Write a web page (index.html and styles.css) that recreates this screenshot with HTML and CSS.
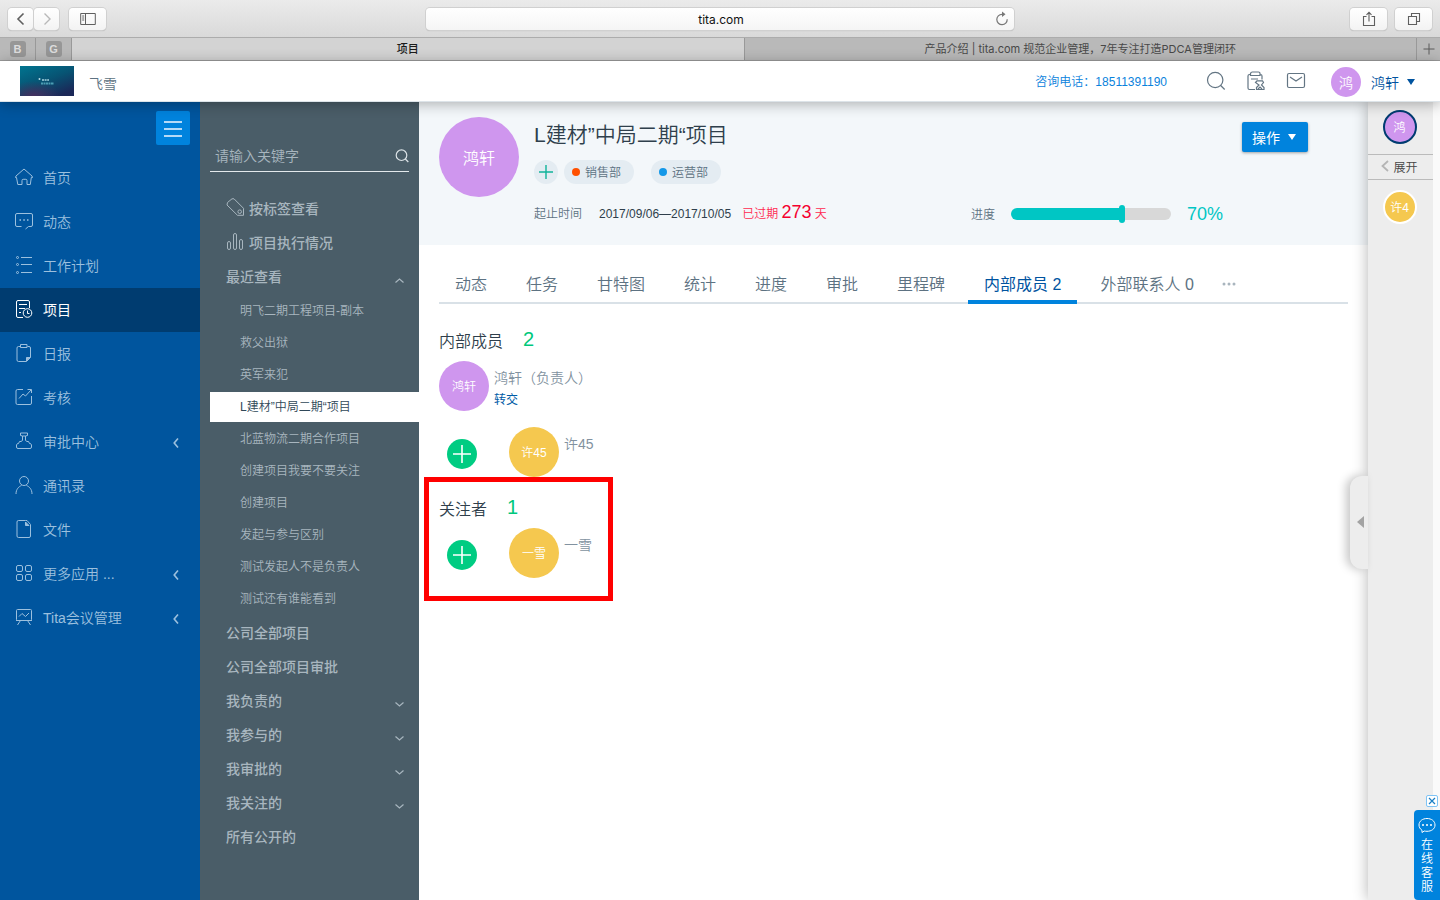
FILE: index.html
```html
<!DOCTYPE html>
<html lang="zh-CN">
<head>
<meta charset="utf-8">
<title>项目</title>
<link rel="stylesheet" href="styles.css">
</head>
<body>
<div class="window">
  <div class="toolbar">
    <div class="toolbar-side">
      <div class="history">
        <button class="tool tool-small" aria-label="后退"><svg width="12" height="14" viewBox="0 0 12 14"><path d="M8.500 1.500 3 7l5.500 5.500" stroke="#5f5f5f" stroke-width="1.600"/></svg></button>
        <button class="tool tool-small" aria-label="前进"><svg width="12" height="14" viewBox="0 0 12 14"><path d="M3.500 1.500 9 7l-5.500 5.500" stroke="#b8b8b8" stroke-width="1.400"/></svg></button>
      </div>
      <button class="tool" aria-label="边栏"><svg width="16" height="14" viewBox="0 0 16 14"><path d="M.7 1.500h14.600v11H.7zM5.500 1.500v11M2.200 4h2M2.200 6h2M2.200 8h2" stroke="#5f5f5f"/></svg></button>
    </div>
    <div class="address">
      <input class="address-input" type="text" value="tita.com" aria-label="网址">
      <button class="reload" aria-label="刷新"><svg width="14" height="16" viewBox="0 0 14 16"><path d="M12.200 8.300A5.200 5.200 0 1 1 7 3.300h2" stroke="#777" stroke-width="1.200"/><path d="M7 .5 10.500 3.300 7 6z" fill="#777"/></svg></button>
    </div>
    <div class="toolbar-side toolbar-end">
      <button class="tool" aria-label="分享"><svg width="14" height="16" viewBox="0 0 14 16"><path d="M4.500 5.500h-3v9h11v-9h-3M7 10.500V1.500M4.500 3.800 7 1.300l2.500 2.500" stroke="#5f5f5f" stroke-width="1.100"/></svg></button>
      <button class="tool" aria-label="标签页"><svg width="14" height="14" viewBox="0 0 14 14"><path d="M1.500 4.500h8v8h-8zM4.500 4V1.500h8v8H10" stroke="#5f5f5f" stroke-width="1.100"/></svg></button>
    </div>
  </div>
  <div class="tabstrip">
    <a class="pin" href="#"><span class="pin-badge">B</span></a>
    <a class="pin" href="#"><span class="pin-badge">G</span></a>
    <a class="page-tab page-tab-current" href="#">项目</a>
    <a class="page-tab" href="#">产品介绍 | tita.com 规范企业管理，7年专注打造PDCA管理闭环</a>
    <button class="new-tab" aria-label="新标签页"><svg width="12" height="12" viewBox="0 0 12 12"><path d="M6 .5v11M.5 6h11" stroke="#5a5a5a"/></svg></button>
  </div>

  <header class="site-header">
    <svg class="logo" width="54" height="30" viewBox="0 0 54 30" role="img" aria-label="飞雪">
      <defs>
        <linearGradient id="sky" x1="0" y1="0" x2=".7" y2="1"><stop offset="0" stop-color="#007590"/><stop offset=".55" stop-color="#075373"/><stop offset="1" stop-color="#1b2858"/></linearGradient>
        <radialGradient id="dusk" cx=".25" cy="1" r=".5"><stop offset="0" stop-color="#45305f"/><stop offset="1" stop-color="#45305f" stop-opacity="0"/></radialGradient>
      </defs>
      <path d="M0 0h54v30H0z" fill="url(#sky)"/><path d="M0 0h54v30H0z" fill="url(#dusk)"/>
      <circle cx="19.500" cy="13" r="1" fill="#b9dce6"/><path d="M22 14h7" stroke="#7db2c4" stroke-width="2" stroke-dasharray="2 .6"/><path d="M21 17.500h13" stroke="#4b9db3" stroke-width="2" stroke-dasharray="2 .5"/>
    </svg>
    <span class="company">飞雪</span>
    <span class="hotline">咨询电话：18511391190</span>
    <nav class="quick">
      <button class="plain" aria-label="搜索"><svg width="20" height="20" viewBox="0 0 20 20"><circle cx="9.200" cy="9" r="7.700"/><path d="m14.700 14.500 4 4"/></svg></button>
      <button class="plain" aria-label="日程"><svg width="20" height="20" viewBox="0 0 20 20"><path d="M4.500 3.500H3.500A1.500 1.500 0 0 0 2 5v12a1.500 1.500 0 0 0 1.500 1.500H9M14.500 3.500A1.500 1.500 0 0 1 16 5v3.500M6.500 1h6a1.500 1.500 0 0 1 1.500 1.500v2H4.500v-2a2 2 0 0 1 2-1.500zM5 8h7M9.500 11.500 11 9.800h5.500l1 1.700-2 2.500 2.500 2.500v2h-7.500v-2l2.500-2.500zM12 18l2-2 2 2"/></svg></button>
      <button class="plain" aria-label="消息"><svg width="20" height="20" viewBox="0 0 20 20"><rect x="1.500" y="2.500" width="17" height="14" rx="1.500"/><path d="m4 6 6 4 6-4"/></svg></button>
    </nav>
    <button class="account"><span class="avatar avatar-30 violet">鸿</span><span>鸿轩</span><svg width="8" height="6" viewBox="0 0 8 6"><path d="M0 0h8L4 6z" fill="#00539f"/></svg></button>
  </header>

  <div class="workspace">
    <nav class="main-nav">
      <button class="menu-toggle" aria-label="菜单"><svg width="18" height="16" viewBox="0 0 18 16"><path d="M0 1h18M0 8h18M0 15h18" stroke="#b5daf7" stroke-width="2"/></svg></button>
      <a class="nav-item" href="#"><svg width="18" height="18" viewBox="0 0 18 18"><path d="M1.500 9.500h-1L1 8l8-7 8 7 .5 1.500h-1.200l-1 7H12v-4a1.200 1.200 0 0 0-1.200-1.200H8.200A1.200 1.200 0 0 0 7 12.500v4H2.800z"/></svg>首页</a>
      <a class="nav-item" href="#"><svg width="18" height="18" viewBox="0 0 18 18"><path d="M6.500 14.500H2A1.500 1.500 0 0 1 .5 13V3A1.500 1.500 0 0 1 2 1.500h14A1.500 1.500 0 0 1 17.500 3v10a1.500 1.500 0 0 1-1.500 1.500h-2.500l-3 2.500"/><path d="M4.500 8H6M8.300 8h1.500M12 8h1.500" stroke-width="1.500"/></svg>动态</a>
      <a class="nav-item" href="#"><svg width="18" height="18" viewBox="0 0 18 18"><path d="M6 1.500h11M6 8.500h11M6 16.500h11"/><circle cx="2.500" cy="1.500" r="1"/><circle cx="2.500" cy="8.500" r="1"/><circle cx="2.500" cy="16.500" r="1"/></svg>工作计划</a>
      <a class="nav-item nav-active" href="#"><svg width="18" height="18" viewBox="0 0 18 18"><path d="M8 17.500H3A1.500 1.500 0 0 1 1.500 16V2A1.500 1.500 0 0 1 3 .5h10A1.500 1.500 0 0 1 14.500 2v6M4 4.500h8M4 8.500h6M4 12.500h2"/><circle cx="12.500" cy="13" r="4.300"/><path d="M12.500 10.500V13.500h2"/></svg>项目</a>
      <a class="nav-item" href="#"><svg width="18" height="18" viewBox="0 0 18 18"><path d="M5 2.500H3.500A1.500 1.500 0 0 0 2 4v12a1.500 1.500 0 0 0 1.500 1.500h8l4-4V4A1.500 1.500 0 0 0 14 2.500h-1.500M5.500.5h6.500v3H5.500z"/><path d="M11.500 17v-3.500H15z" fill="#9cc0de"/></svg>日报</a>
      <a class="nav-item" href="#"><svg width="18" height="18" viewBox="0 0 18 18"><path d="M8 1.500H2.500A1.500 1.500 0 0 0 1 3v12a1.500 1.500 0 0 0 1.500 1.500H15a1.500 1.500 0 0 0 1.500-1.500V8M4 10.500 8 6l2.500 2L16 2M12.500 1.500H16.500V5"/></svg>考核</a>
      <a class="nav-item" href="#"><svg width="18" height="18" viewBox="0 0 18 18"><path d="M7.500 4v4.500L6 9.500H4.500L3.500 11.500H2.500L1.500 13v2A1.500 1.500 0 0 0 3 16.500h12a1.500 1.500 0 0 0 1.500-1.500v-2l-1-1.500h-1l-1-2H12L10.500 8.500V4M5.500 3.500V1h7v2.500l-2 .5h-3z"/></svg>审批中心<svg class="nav-arrow" width="6" height="10" viewBox="0 0 6 10"><path d="M5 .5 1.200 5 5 9.500"/></svg></a>
      <a class="nav-item" href="#"><svg width="18" height="18" viewBox="0 0 18 18"><circle cx="9" cy="5" r="4.500"/><path d="M1 18c0-5 3-7.500 5.500-8.500M17 18c0-5-3-7.500-5.500-8.500"/></svg>通讯录</a>
      <a class="nav-item" href="#"><svg width="18" height="18" viewBox="0 0 18 18"><path d="M10.500.5h-7A1.500 1.500 0 0 0 2 2v14a1.500 1.500 0 0 0 1.500 1.500H14a1.500 1.500 0 0 0 1.500-1.500V4.500L12 .5z"/><path d="M10.500 2v3.500H14z" fill="#9cc0de"/></svg>文件</a>
      <a class="nav-item" href="#"><svg width="18" height="18" viewBox="0 0 18 18"><rect x="1.500" y="1.500" width="6" height="6" rx="1.500"/><rect x="10.500" y="1.500" width="6" height="6" rx="1.500"/><rect x="1.500" y="10.500" width="6" height="6" rx="1.500"/><rect x="10.500" y="10.500" width="6" height="6" rx="1.500"/></svg>更多应用 ...<svg class="nav-arrow" width="6" height="10" viewBox="0 0 6 10"><path d="M5 .5 1.200 5 5 9.500"/></svg></a>
      <a class="nav-item" href="#"><svg width="18" height="18" viewBox="0 0 18 18"><rect x="1.500" y="1.500" width="15" height="11" rx="1"/><path d="M4 8.500 7 5.500l3.500 3 3.500-3.500M1 12.500h16M5.500 12.500 2.500 17M12.500 12.500l3 4.500"/></svg>Tita会议管理<svg class="nav-arrow" width="6" height="10" viewBox="0 0 6 10"><path d="M5 .5 1.200 5 5 9.500"/></svg></a>
    </nav>

    <aside class="project-nav">
      <div class="search">
        <input class="search-input" type="text" placeholder="请输入关键字" aria-label="请输入关键字">
        <button class="search-button" aria-label="搜索"><svg width="14" height="14" viewBox="0 0 14 14"><circle cx="6.500" cy="6.200" r="5.300"/><path d="m10.300 10 3 3"/></svg></button>
      </div>
      <a class="group" href="#"><svg width="19" height="19" viewBox="0 0 19 19"><path d="M1.500 4.500 6 .8h2l9.500 9.500v7h-6L1 7z" stroke-linejoin="round"/><circle cx="13.700" cy="13.700" r="1.800"/></svg>按标签查看</a>
      <a class="group" href="#"><svg width="19" height="19" viewBox="0 0 19 19"><rect x="1.500" y="9.500" width="3" height="8" rx="1.500"/><rect x="7.500" y="1.500" width="3" height="16" rx="1.500"/><rect x="13.500" y="7.500" width="3" height="10" rx="1.500"/></svg>项目执行情况</a>
      <a class="group" href="#">最近查看<svg class="fold" width="9" height="5" viewBox="0 0 9 5"><path d="m.5 4.500 4-3.500 4 3.500"/></svg></a>
      <div class="recent">
        <a class="recent-item" href="#">明飞二期工程项目-副本</a>
        <a class="recent-item" href="#">救父出狱</a>
        <a class="recent-item" href="#">英军来犯</a>
        <a class="recent-item recent-active" href="#">L建材”中局二期“项目</a>
        <a class="recent-item" href="#">北蓝物流二期合作项目</a>
        <a class="recent-item" href="#">创建项目我要不要关注</a>
        <a class="recent-item" href="#">创建项目</a>
        <a class="recent-item" href="#">发起与参与区别</a>
        <a class="recent-item" href="#">测试发起人不是负责人</a>
        <a class="recent-item" href="#">测试还有谁能看到</a>
      </div>
      <a class="group" href="#">公司全部项目</a>
      <a class="group" href="#">公司全部项目审批</a>
      <a class="group" href="#">我负责的<svg class="fold" width="9" height="5" viewBox="0 0 9 5"><path d="m.5.500 4 3.500 4-3.500"/></svg></a>
      <a class="group" href="#">我参与的<svg class="fold" width="9" height="5" viewBox="0 0 9 5"><path d="m.5.500 4 3.500 4-3.500"/></svg></a>
      <a class="group" href="#">我审批的<svg class="fold" width="9" height="5" viewBox="0 0 9 5"><path d="m.5.500 4 3.500 4-3.500"/></svg></a>
      <a class="group" href="#">我关注的<svg class="fold" width="9" height="5" viewBox="0 0 9 5"><path d="m.5.500 4 3.500 4-3.500"/></svg></a>
      <a class="group" href="#">所有公开的</a>
    </aside>

    <main class="project">
      <section class="summary">
        <span class="avatar avatar-80 violet">鸿轩</span>
        <div class="summary-body">
          <div class="title-row">
            <h1 class="title">L建材”中局二期“项目</h1>
            <button class="action">操作<svg width="8" height="6" viewBox="0 0 8 6"><path d="M0 0h8L4 6z" fill="#fff"/></svg></button>
          </div>
          <div class="tags">
            <button class="tag-add" aria-label="添加标签"><svg width="14" height="14" viewBox="0 0 14 14"><path d="M7 0v14M0 7h14" stroke="#10b39a" stroke-width="1.400"/></svg></button>
            <span class="tag"><i class="dot dot-orange"></i>销售部</span>
            <span class="tag"><i class="dot dot-blue"></i>运营部</span>
          </div>
          <div class="facts">
            <div class="dates"><span>起止时间</span><time class="range">2017/09/06—2017/10/05</time><span class="overdue">已过期 <b class="overdue-days">273</b> 天</span></div>
            <div class="progress"><label for="done">进度</label><input class="slider" id="done" type="range" min="0" max="100" value="70"><output class="percent">70%</output></div>
          </div>
        </div>
      </section>

      <nav class="tabs">
        <a class="tab" href="#">动态</a><a class="tab" href="#">任务</a><a class="tab" href="#">甘特图</a><a class="tab" href="#">统计</a><a class="tab" href="#">进度</a><a class="tab" href="#">审批</a><a class="tab" href="#">里程碑</a><a class="tab tab-active" href="#">内部成员 2</a><a class="tab" href="#">外部联系人 0</a>
        <button class="more" aria-label="更多"><svg width="14" height="4" viewBox="0 0 14 4"><g fill="#a9b5be"><circle cx="2" cy="2" r="1.500"/><circle cx="7" cy="2" r="1.500"/><circle cx="12" cy="2" r="1.500"/></g></svg></button>
      </nav>

      <section class="people">
        <h2 class="people-title">内部成员<span class="count">2</span></h2>
        <div class="person">
          <span class="avatar avatar-50 violet">鸿轩</span>
          <div class="person-text"><span>鸿轩（负责人）</span><a class="transfer" href="#">转交</a></div>
        </div>
        <div class="person-row">
          <button class="add" aria-label="添加成员"><svg width="18" height="18" viewBox="0 0 18 18"><path d="M9 0v18M0 9h18" stroke="#fff" stroke-width="1.600"/></svg></button>
          <div class="person"><span class="avatar avatar-50 amber">许45</span><div class="person-text"><span>许45</span></div></div>
        </div>
      </section>
      <section class="people followers">
        <h2 class="people-title">关注者<span class="count">1</span></h2>
        <div class="person-row">
          <button class="add" aria-label="添加关注者"><svg width="18" height="18" viewBox="0 0 18 18"><path d="M9 0v18M0 9h18" stroke="#fff" stroke-width="1.600"/></svg></button>
          <div class="person"><span class="avatar avatar-50 amber">一雪</span><div class="person-text"><span>一雪</span></div></div>
        </div>
        <div class="highlight"></div>
      </section>
    </main>

    <aside class="rail">
      <div class="rail-body">
        <div class="rail-top"><span class="avatar avatar-34 violet ring-navy">鸿</span></div>
        <button class="expand"><svg width="8" height="12" viewBox="0 0 8 12"><path d="M7 1 1.500 6 7 11" stroke="#b5b5b5" stroke-width="1.800"/></svg>展开</button>
        <div class="rail-list"><span class="avatar avatar-34 amber ring-white">许4</span></div>
      </div>
      <button class="handle" aria-label="展开侧栏"><svg width="7" height="12" viewBox="0 0 7 12"><path d="M7 0v12L0 6z" fill="#a3a3a3"/></svg></button>
    </aside>
  </div>

  <div class="support">
    <button class="support-close" aria-label="关闭"><svg width="8" height="8" viewBox="0 0 8 8"><path d="m1 1 6 6M7 1 1 7" stroke="#1b7fc4" stroke-width="1.200"/></svg></button>
    <button class="support-open"><svg width="18" height="17" viewBox="0 0 18 17"><path d="M4 15.500v-2.200C2 12 1 10 1 8c0-4 3.600-6.500 8-6.500S17 4 17 8s-3.600 6.300-8 6.300c-1 0-2-.1-2.800-.3z" stroke="#fff"/><g fill="#fff"><circle cx="5" cy="8" r="1"/><circle cx="9" cy="8" r="1"/><circle cx="13" cy="8" r="1"/></g></svg><span class="support-text">在线客服</span></button>
  </div>
</div>
</body>
</html>
```
FILE: styles.css
```css
* { box-sizing: border-box; }
body {
  margin: 0;
  font-family: "Liberation Sans", "Noto Sans CJK SC", sans-serif;
  font-size: 14px;
  font-weight: 350;
  color: #2f3f4c;
}
a { color: inherit; text-decoration: none; }
button, input { font: inherit; color: inherit; }
button { border: 0; padding: 0; background: none; display: flex; align-items: center; justify-content: center; }
svg { display: block; flex: none; fill: none; }
h1, h2 { margin: 0; font-weight: inherit; }
.window { position: relative; min-height: 100vh; display: flex; flex-direction: column; }

/* browser bar */
.toolbar { display: flex; align-items: center; height: 38px; padding: 0 8px; background: linear-gradient(#ebebeb, #d9d9d9); border-bottom: 1px solid #acacac; }
.toolbar-side { flex: 1; display: flex; gap: 10px; }
.toolbar-end { justify-content: flex-end; gap: 8px; }
.history { display: flex; gap: 1px; }
.tool { width: 37px; height: 22px; border-radius: 4px; background: linear-gradient(#fff, #f3f3f3); box-shadow: 0 0 0 1px #d0d0d0, 0 1px 1px #aaa; }
.tool-small { width: 25px; }
.address { position: relative; flex: 0 1 588px; display: flex; }
.address-input { width: 100%; height: 22px; border: 0; border-radius: 4px; padding: 1px 29px 0 31px; text-align: center; font-family: Inter, sans-serif; font-size: 12px; font-weight: 400; color: #111; background: linear-gradient(#fff, #f5f5f5); box-shadow: 0 0 0 1px #d0d0d0, 0 1px 1px #aaa; }
.reload { position: absolute; top: 3px; right: 5px; }
.tabstrip { display: flex; height: 23px; background: #b9b9b9; border-bottom: 1px solid #9c9c9c; font-size: 11px; font-weight: 400; color: #484848; }
.pin { width: 36px; display: flex; align-items: center; justify-content: center; border-right: 1px solid #999; }
.pin-badge { width: 16px; height: 16px; border-radius: 3px; background: #979797; color: #ddd; font-size: 11px; font-weight: 700; line-height: 16px; text-align: center; }
.page-tab { flex: 1; min-width: 0; line-height: 22px; text-align: center; white-space: nowrap; overflow: hidden; border-right: 1px solid #999; font-family: Inter, "Noto Sans CJK SC", sans-serif; }
.page-tab-current { background: #d3d3d3; color: #1c1c1c; font-weight: 500; }
.new-tab { width: 23px; }

/* site header */
.site-header { position: relative; z-index: 3; display: flex; align-items: center; height: 41px; padding: 0 25px 0 20px; background: #fff; border-bottom: 1px solid #dde4e9; box-shadow: 0 2px 14px rgba(0, 0, 0, .3); }
.company { margin: 4px auto 0 15px; color: #5d7282; }
.hotline { padding-bottom: 2px; color: #0a82dc; font-size: 12px; }
.quick { display: flex; gap: 20px; margin: 0 25px 0 39px; }
.plain svg { stroke: #637583; stroke-width: 1.2; }
.account { gap: 10px; padding-top: 2px; color: #00539f; white-space: nowrap; }
.account svg { margin-left: -2px; }

.avatar { display: flex; flex: none; align-items: center; justify-content: center; border-radius: 50%; padding-bottom: 1px; color: #fff; font-size: 12px; white-space: nowrap; }
.avatar-30 { width: 30px; height: 30px; font-size: 14px; }
.avatar-34 { width: 34px; height: 34px; }
.avatar-50 { width: 50px; height: 50px; }
.avatar-80 { width: 80px; height: 80px; font-size: 16px; }
.violet { background: #cf96ee; }
.amber { background: #f5c84f; }
.ring-navy { border: 2px solid #003c71; }
.ring-white { border: 2px solid #fff; }

.workspace { flex: 1; display: flex; }

/* main navigation */
.main-nav { flex: none; width: 200px; padding-top: 9px; background: #00559e; color: #9cc0de; }
.menu-toggle { width: 34px; height: 34px; margin: 0 10px 11px auto; padding-top: 2px; border-radius: 2px; background: #0083dd; }
.nav-item { display: flex; align-items: center; gap: 10px; height: 44px; padding: 0 21px 2px 15px; }
.nav-item svg { stroke: #9cc0de; }
.nav-item .nav-arrow { margin: 4px 0 0 auto; stroke-width: 1.6; }
.nav-active { background: #003c70; color: #fff; font-weight: 400; }
.nav-item.nav-active svg { stroke: #fff; }

/* project navigation */
.project-nav { flex: none; width: 219px; padding: 39px 0 46px; background: #4a5d68; color: #a8b6bf; }
.search { display: flex; align-items: center; height: 31px; margin: 0 10px 20px; border-bottom: 1px solid #e3e9ec; }
.search-input { flex: 1; min-width: 0; padding: 0 5px; border: 0; background: none; font-size: 14px; }
.search-input::placeholder { color: #a8b6bf; opacity: 1; }
.search-button svg { stroke: #dce3e7; stroke-width: 1.2; }
.group { display: flex; align-items: center; gap: 4px; height: 34px; padding: 0 15px 2px 26px; font-weight: 500; }
.group svg { stroke: #a8b6bf; margin-bottom: 2px; }
.group .fold { margin: 8px 0 0 auto; stroke-width: 1.2; }
.recent { display: flex; flex-direction: column; gap: 2px; padding: 2px 0 2px 10px; font-size: 12px; }
.recent-item { padding-left: 30px; line-height: 30px; }
.recent-active { background: #fff; color: #2f4858; }

/* project */
.project { flex: 1; min-width: 0; background: #fff; }
.summary { display: flex; gap: 15px; padding: 15px 60px 19px 20px; background: #f3f7fa; }
.summary-body { flex: 1; min-width: 0; }
.title-row { display: flex; justify-content: space-between; align-items: center; height: 38px; }
.title { padding-bottom: 2px; font-size: 21px; line-height: 36px; }
.action { gap: 8px; width: 66px; height: 30px; margin-top: 2px; padding: 0 2px 1px 0; border-radius: 2px; background: #0083dd; color: #fff; box-shadow: 0 1px 3px rgba(0, 0, 0, .35); font-weight: 400; }
.tags { display: flex; align-items: center; gap: 17px; margin-top: 5px; color: #5d7282; font-size: 12px; }
.tag-add { width: 24px; height: 24px; border-radius: 50%; background: #e4ecf2; margin-right: -11px; }
.tag { display: flex; align-items: center; gap: 5px; height: 24px; padding: 0 13px 1px 8px; border-radius: 12px; background: #e4ecf2; }
.dot { width: 8px; height: 8px; border-radius: 50%; }
.dot-orange { background: #ff5000; }
.dot-blue { background: #1498e8; }
.facts { display: flex; justify-content: space-between; align-items: center; height: 24px; margin-top: 18px; font-size: 12px; color: #5d7282; white-space: nowrap; }
.dates { display: flex; align-items: baseline; padding-bottom: 3px; }
.range { margin: 0 11px 0 17px; color: #2f3f4c; }
.overdue { color: #ff2a50; }
.overdue-days { font-size: 18px; font-weight: 400; color: #f5002f; }
.progress { display: flex; align-items: center; width: 337px; }
.progress label { padding-bottom: 2px; }
.slider { appearance: none; width: 160px; height: 18px; margin: 0 16px; background: none; }
.slider::-webkit-slider-runnable-track { height: 12px; border-radius: 6px; background: linear-gradient(90deg, #00c6c4 70%, #d8d8d8 70%); }
.slider::-webkit-slider-thumb { appearance: none; width: 6px; height: 18px; margin-top: -3px; border-radius: 3px; background: #00c6c4; }
.percent { font-size: 18px; color: #00c6c4; }

.tabs { display: flex; gap: 7px; margin: 18px 20px 0; border-bottom: 2px solid #d9e1e7; font-size: 16px; color: #5d7282; white-space: nowrap; }
.tab { height: 41px; padding: 1px 16px 0; margin-bottom: -2px; line-height: 42px; border-bottom: 4px solid transparent; }
.tab-active { color: #00539f; border-color: #0083dd; font-weight: 400; }
.more { margin-left: 5px; padding-top: 3px; }

.people { position: relative; padding: 21px 20px 0; color: #8292a0; }
.followers { padding-top: 16px; }
.people-title { display: flex; align-items: center; gap: 20px; height: 30px; padding-bottom: 1px; font-size: 16px; color: #2f3f4c; }
.count { font-size: 20px; color: #00c87c; }
.person { display: flex; gap: 5px; margin-top: 5px; }
.people-title + .person { margin-top: 6px; }
.person-text { display: flex; flex-direction: column; padding-top: 7px; line-height: 20px; }
.transfer { color: #005ba6; font-size: 12px; line-height: 24px; font-weight: 400; }
.person-row { display: flex; align-items: center; gap: 32px; padding-left: 8px; }
.people .person + .person-row { margin-top: 10px; }
.add { width: 30px; height: 30px; margin-top: 9px; border-radius: 50%; background: #00cc82; }
.highlight { position: absolute; inset: 0 auto auto 5px; width: 189px; height: 124px; border: 5px solid #f00; }

/* contact rail */
.rail { position: relative; z-index: 2; flex: none; width: 72px; padding-right: 7px; background: #fafafa; box-shadow: 0 0 14px rgba(0, 0, 0, .3); }
.rail-body { height: 100%; background: #ededed; }
.rail-top, .rail-list { display: flex; justify-content: center; padding: 8px 2px 10px 0; }
.rail-top { height: 52px; }
.rail-list { padding-top: 10px; }
.expand { width: 100%; height: 26px; gap: 4px; padding: 0 2px 2px 0; border: solid #bbb; border-width: 1px 0; font-size: 12px; color: #444; }
.handle { position: absolute; top: 374px; left: -18px; width: 18px; height: 93px; padding: 0 0 2px 2px; border-radius: 12px 0 0 12px; background: #ededed; box-shadow: -4px 0 10px rgba(0, 0, 0, .22); }

/* online support */
.support { position: absolute; right: 0; bottom: 0; z-index: 4; display: flex; flex-direction: column; align-items: flex-end; gap: 3px; }
.support-close { width: 12px; height: 12px; margin-right: 2px; border: 1px solid #80c4f5; border-radius: 2px; background: #fff; }
.support-open { flex-direction: column; justify-content: flex-start; gap: 4px; width: 26px; height: 90px; padding-top: 7px; border-radius: 4px 0 0 4px; background: #0083dd; color: #fff; }
.support-text { width: 12px; font-size: 12px; line-height: 14px; }
```
